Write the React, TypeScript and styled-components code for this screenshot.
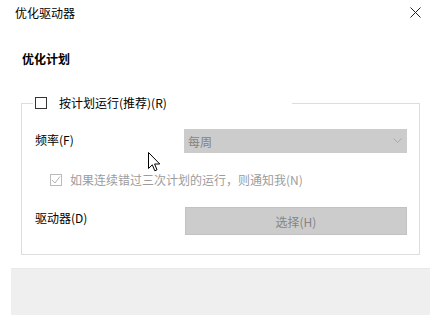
import React from "react";
import styled, { createGlobalStyle } from "styled-components";

const Global = createGlobalStyle`
  html, body { margin: 0; padding: 0; background: #ffffff; }
  body { font-family: "Noto Sans CJK SC", "Microsoft YaHei", "Liberation Sans", sans-serif; }
`;

const Window = styled.div`
  position: relative;
  width: 437px;
  height: 318px;
  background: #ffffff;
  display: flex;
  flex-direction: column;
  font-size: 12px;
  color: #000;
  overflow: hidden;
`;

const TitleBar = styled.div`
  height: 25px;
  display: flex;
  align-items: center;
  justify-content: space-between;
  padding: 0 16px 0 15px;
`;

const Title = styled.span`
  font-size: 12px;
  line-height: 16px;
`;

const CloseButton = styled.div`
  width: 11px;
  height: 11px;
  display: flex;
`;

const Heading = styled.div`
  margin: 26px 0 0 22px;
  font-weight: bold;
  line-height: 16px;
`;

const Group = styled.fieldset`
  margin: 28px 0 0 21px;
  width: 399px;
  box-sizing: border-box;
  border: 1px solid #dddddd;
  padding: 18px 11px 19px 13px;
  min-width: 0;
`;

const Legend = styled.legend`
  margin-left: -2px;
  padding: 0 0 0 2px;
  width: 259px;
  box-sizing: border-box;
  height: 16px;
  display: flex;
  align-items: center;
  line-height: 16px;
`;

const Box = styled.span<{ $disabled?: boolean }>`
  width: 10px;
  height: 10px;
  border: 1px solid ${(p) => (p.$disabled ? "#bcbcbc" : "#333333")};
  background: #fff;
  display: inline-flex;
  align-items: center;
  justify-content: center;
  flex-shrink: 0;
`;

const LegendLabel = styled.span`
  margin-left: 12px;
`;

const Row = styled.div<{ $mt?: number }>`
  display: flex;
  align-items: flex-start;
  margin-top: ${(p) => p.$mt ?? 0}px;
`;

const FieldLabel = styled.span`
  width: 149px;
  line-height: 16px;
  padding-top: 3px;
`;

const Select = styled.div`
  width: 223px;
  height: 24px;
  box-sizing: border-box;
  background: #cccccc;
  display: flex;
  align-items: center;
  justify-content: space-between;
  padding: 0 5px 0 4px;
  color: #838383;
`;

const CheckRow = styled.div`
  display: flex;
  align-items: center;
  margin: 19px 0 0 15px;
  color: #9c9c9c;
  line-height: 16px;
`;

const CheckText = styled.span`
  margin-left: 8px;
`;

const Button = styled.div`
  width: 222px;
  height: 28px;
  box-sizing: border-box;
  margin-left: 1px;
  background: #cccccc;
  border: 1px solid #c2c2c2;
  display: flex;
  align-items: center;
  justify-content: center;
  color: #858585;
`;

const Footer = styled.div`
  margin: 13px 0 0 11px;
  width: 419px;
  height: 47px;
  background: #efefef;
  border-top: 1px solid #e8e8e8;
  box-sizing: border-box;
`;

const Cursor = styled.svg`
  position: absolute;
  left: 148px;
  top: 152px;
`;

export default function App() {
  return (
    <>
      <Global />
      <Window>
        <TitleBar>
          <Title>优化驱动器</Title>
          <CloseButton>
            <svg width="11" height="11" viewBox="0 0 11 11">
              <path d="M0.5 0.5 L10.5 10.5 M10.5 0.5 L0.5 10.5" stroke="#222" strokeWidth="1" />
            </svg>
          </CloseButton>
        </TitleBar>
        <Heading>优化计划</Heading>
        <Group>
          <Legend>
            <Box />
            <LegendLabel>按计划运行(推荐)(R)</LegendLabel>
          </Legend>
          <Row>
            <FieldLabel>频率(F)</FieldLabel>
            <Select>
              <span>每周</span>
              <svg width="9" height="6" viewBox="0 0 9 6">
                <path d="M0.5 0.5 L4.5 4.5 L8.5 0.5" fill="none" stroke="#a8a8a8" strokeWidth="1" />
              </svg>
            </Select>
          </Row>
          <CheckRow>
            <Box $disabled>
              <svg width="10" height="10" viewBox="0 0 10 10">
                <path d="M1 5 L4 8 L9 1.5" fill="none" stroke="#b4b4b4" strokeWidth="1" />
              </svg>
            </Box>
            <CheckText>如果连续错过三次计划的运行，则通知我(N)</CheckText>
          </CheckRow>
          <Row $mt={19}>
            <FieldLabel>驱动器(D)</FieldLabel>
            <Button>选择(H)</Button>
          </Row>
        </Group>
        <Footer />
        <Cursor width="13" height="21" viewBox="0 0 13 21">
          <path
            d="M0.5 0.5 L0.5 16.5 L4.3 12.8 L6.8 18.8 L9 17.8 L6.6 12 L11.8 12 Z"
            fill="#ffffff"
            stroke="#000000"
            strokeWidth="1"
            strokeLinejoin="miter"
          />
        </Cursor>
      </Window>
    </>
  );
}
